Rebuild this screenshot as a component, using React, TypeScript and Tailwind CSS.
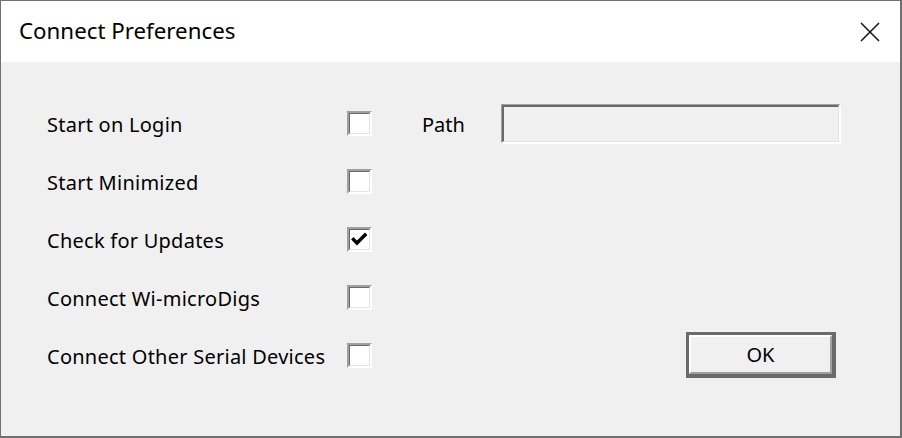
const font = { fontFamily: '"Noto Sans", "Open Sans", sans-serif' };

function CheckBox({ checked }: { checked?: boolean }) {
  return (
    <div className="h-[25px] w-[25px] shrink-0 border-2 border-t-[#a0a0a0] border-l-[#a0a0a0] border-b-white border-r-white">
      <div className="flex h-full w-full items-center justify-center border border-t-[#696969] border-l-[#696969] border-b-[#e3e3e3] border-r-[#e3e3e3] bg-white">
        {checked && (
          <svg width="17" height="15" viewBox="0 0 17 15">
            <path d="M2.5 7.5 L6 11 L14 3" fill="none" stroke="#000" strokeWidth="3.4" strokeLinecap="square" />
          </svg>
        )}
      </div>
    </div>
  );
}

const rows = [
  { label: "Start on Login", checked: false },
  { label: "Start Minimized", checked: false },
  { label: "Check for Updates", checked: true },
  { label: "Connect Wi-microDigs", checked: false },
  { label: "Connect Other Serial Devices", checked: false },
];

export default function App() {
  return (
    <div
      className="flex h-[438px] w-[902px] flex-col border-t border-l border-r-2 border-b-2 border-[#707070] bg-[#f0f0f0] text-[#000]"
      style={font}
    >
      <div className="flex h-[61px] shrink-0 items-center justify-between bg-white pl-[18px] pr-[20px]">
        <span className="text-[22.3px] leading-none">Connect Preferences</span>
        <svg width="20" height="20" viewBox="0 0 20 20">
          <path d="M1 1 L19 19 M19 1 L1 19" stroke="#111" strokeWidth="1.5" />
        </svg>
      </div>
      <div className="flex flex-col pt-[34px] pl-[46px] pr-[61px]">
        {rows.map((r, i) => (
          <div key={r.label} className="flex h-[58px] items-center">
            <span className="w-[300px] shrink-0 text-[20px] leading-none tracking-[0.25px] whitespace-nowrap">{r.label}</span>
            <div className="-mt-[4px]">
              <CheckBox checked={r.checked} />
            </div>
            {i === 0 && (
              <>
                <span className="ml-[50px] w-[79px] shrink-0 text-[20px] leading-none">Path</span>
                <div className="-mt-[2px] h-[40px] w-[340px] shrink-0 border-t border-l border-t-[#a0a0a0] border-l-[#a0a0a0] border-b-2 border-r-2 border-b-white border-r-white">
                  <div className="h-full w-full border-t-2 border-l-2 border-t-[#6a6a6a] border-l-[#6a6a6a] border-b border-r border-b-[#e3e3e3] border-r-[#e3e3e3] bg-[#f0f0f0]" />
                </div>
              </>
            )}
            {i === 4 && (
              <div className="ml-auto mr-[3px] -mt-[4px] h-[46px] w-[150px] shrink-0 border-[3px] border-b-4 border-r-4 border-[#6a6a6a]">
                <div className="flex h-full w-full items-center justify-center border-2 border-t-white border-l-white border-b-[#a0a0a0] border-r-[#a0a0a0] bg-[#f0f0f0] text-[20px] leading-none">
                  OK
                </div>
              </div>
            )}
          </div>
        ))}
      </div>
    </div>
  );
}
